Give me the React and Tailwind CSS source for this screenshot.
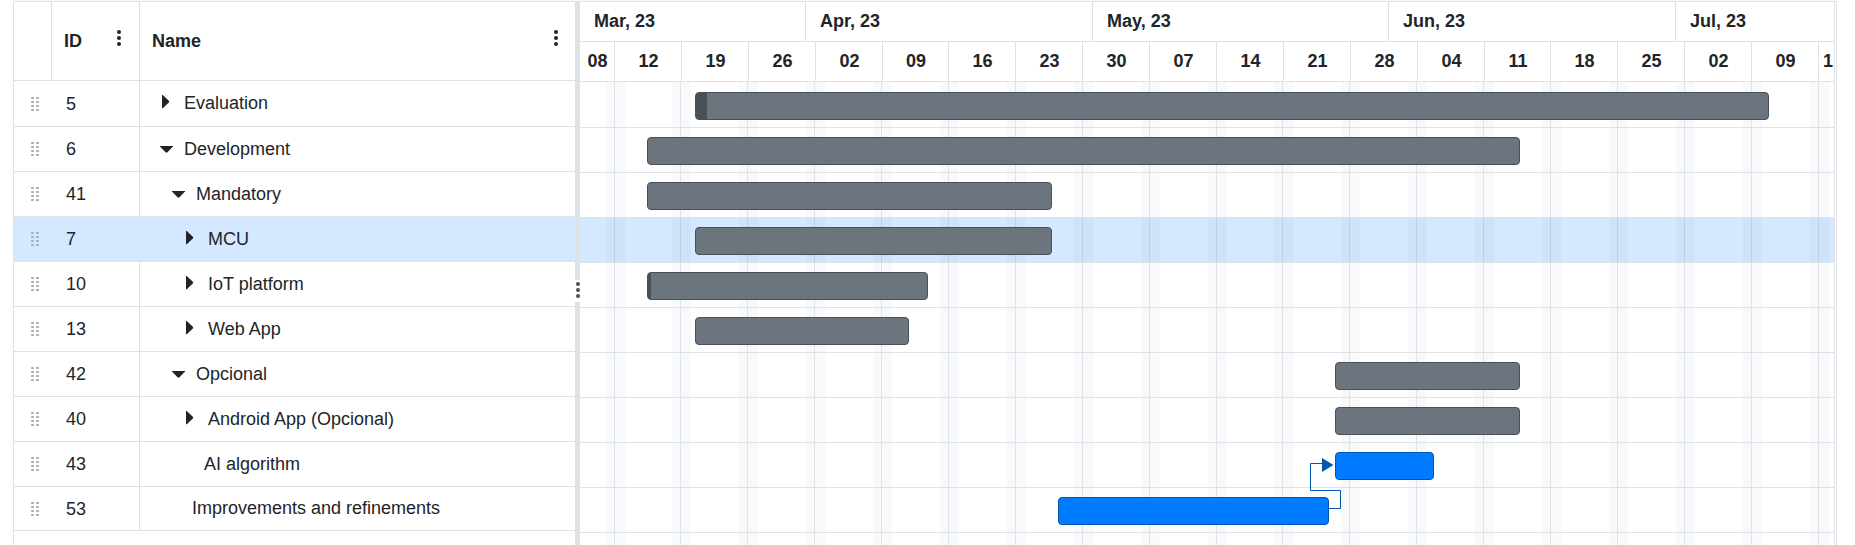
const DAY = 66.8889 / 7;
const FIRST_SUNDAY = 34;
const dayX = (days) => FIRST_SUNDAY + Math.round(days * DAY);

const months = [
  { label: 'Mar, 23', end: 20 },
  { label: 'Apr, 23', end: 50 },
  { label: 'May, 23', end: 81 },
  { label: 'Jun, 23', end: 111 },
  { label: 'Jul, 23', end: null },
];

const weeks = ['08', '12', '19', '26', '02', '09', '16', '23', '30', '07', '14', '21', '28', '04', '11', '18', '25', '02', '09', '1'];
const sundays = weeks.slice(1).map((_, i) => FIRST_SUNDAY + Math.floor(i * 7 * DAY));

const tasks = [
  { id: 5, name: 'Evaluation', level: 0, state: 'closed', start: 115, end: 1189, progress: 11 },
  { id: 6, name: 'Development', level: 0, state: 'open', start: 67, end: 940 },
  { id: 41, name: 'Mandatory', level: 1, state: 'open', start: 67, end: 472 },
  { id: 7, name: 'MCU', level: 2, state: 'closed', start: 115, end: 472, selected: true },
  { id: 10, name: 'IoT platform', level: 2, state: 'closed', start: 67, end: 348, progress: 3 },
  { id: 13, name: 'Web App', level: 2, state: 'closed', start: 115, end: 329 },
  { id: 42, name: 'Opcional', level: 1, state: 'open', start: 755, end: 940 },
  { id: 40, name: 'Android App (Opcional)', level: 2, state: 'closed', start: 755, end: 940 },
  { id: 43, name: 'AI algorithm', level: 2, start: 755, end: 854 },
  { id: 53, name: 'Improvements and refinements', level: 1, start: 478, end: 749 },
];

function MoreButton({ label }) {
  return (
    <button type="button" aria-label={label} className="mb-1.5 flex h-4 w-4 items-center justify-center text-[#212529]">
      <svg width="4" height="16" viewBox="0 0 4 16" fill="currentColor">
        <circle cx="2" cy="2" r="2" />
        <circle cx="2" cy="8" r="2" />
        <circle cx="2" cy="14" r="2" />
      </svg>
    </button>
  );
}

function DragHandle() {
  return (
    <svg width="8" height="14" viewBox="0 0 8 14" fill="#adb2b6" className="mx-auto">
      {[0, 4, 8, 12].map((y) => (
        <g key={y}>
          <rect x="0" y={y} width="3" height="2" rx="0.5" />
          <rect x="5" y={y} width="3" height="2" rx="0.5" />
        </g>
      ))}
    </svg>
  );
}

function Toggle({ state, name }) {
  return (
    <button type="button" aria-label={`Toggle ${name}`} className="mr-[11px] block w-[13px]">
      <svg width="13" height="16" viewBox="0 0 13 16" fill="#212529">
        {state === 'open' ? <path d="M0 5h13v0.6L7.5 11.2q-1 0.900-2 0L0 5.600z" /> : <path d="M2 0h0.800l6 5.800q0.800 0.800 0 1.600L2.800 13.300H2z" />}
      </svg>
    </button>
  );
}

function TaskTable() {
  return (
    <table className="w-full table-fixed border-separate border-spacing-0 text-left text-[18px] leading-6">
      <colgroup>
        <col className="w-[38px]" />
        <col className="w-[88px]" />
        <col />
      </colgroup>
      <thead>
        <tr className="h-[79px]">
          <th aria-label="Reorder" className="border-r border-b border-[#dee2e6] p-0" />
          <th className="border-r border-b border-[#dee2e6] p-0 pr-3 pl-3">
            <div className="flex items-center justify-between font-bold">
              ID
              <MoreButton label="ID column menu" />
            </div>
          </th>
          <th className="border-b border-[#dee2e6] p-0 pr-[11px] pl-3">
            <div className="flex items-center justify-between font-bold">
              Name
              <MoreButton label="Name column menu" />
            </div>
          </th>
        </tr>
      </thead>
      <tbody>
        {tasks.map((task) => (
          <tr key={task.id} className={`h-[45px] first:h-[46px] last:h-[44px] ${task.selected ? 'bg-[#d4e8ff]' : 'bg-white'}`}>
            <td className="border-b border-[#dee2e6] p-0 pl-1">
              <DragHandle />
            </td>
            <td className="border-r border-b border-[#dee2e6] p-0 pl-3.5">{task.id}</td>
            <td className="border-b border-[#dee2e6] p-0 pb-px pl-5">
              <div className="flex items-center" style={{ paddingLeft: task.level * 12 }}>
                {task.state ? <Toggle state={task.state} name={task.name} /> : <span className="w-5" />}
                {task.name}
              </div>
            </td>
          </tr>
        ))}
      </tbody>
    </table>
  );
}

function Bar({ task }) {
  const colors = task.state ? 'border-[#495057] bg-[#6c757d]' : 'border-[#0056b3] bg-[#007bff]';
  return (
    <div
      className={`absolute top-[9px] h-7 overflow-hidden rounded border ${colors}`}
      style={{ left: task.start, width: task.end - task.start }}
    >
      {task.progress && <div className="h-full bg-[#495057]" style={{ width: task.progress }} />}
    </div>
  );
}

function Timeline() {
  return (
    <div className="flex min-w-0 flex-1 flex-col overflow-hidden border-r border-[#dee2e6] text-[18px] font-bold">
      <div className="flex h-10 border-b border-[#dee2e6]">
        {months.map((month, i) => {
          const from = i ? dayX(months[i - 1].end) + 1 : 0;
          return month.end ? (
            <div
              key={month.label}
              className="flex shrink-0 items-center border-r border-[#dee2e6] pl-3.5"
              style={{ width: dayX(month.end) + 1 - from }}
            >
              {month.label}
            </div>
          ) : (
            <div key={month.label} className="flex flex-1 items-center pl-3.5">
              {month.label}
            </div>
          );
        })}
      </div>
      <div className="flex h-10 border-b border-[#dee2e6]">
        {weeks.map((week, i) => {
          if (i === weeks.length - 1) {
            return (
              <div key={i} className="flex flex-1 items-center overflow-hidden pl-1">
                {week}
              </div>
            );
          }
          const from = i ? dayX((i - 1) * 7) + 1 : 0;
          return (
            <div
              key={i}
              className="flex shrink-0 items-center justify-center border-r border-[#dee2e6] pl-px"
              style={{ width: dayX(i * 7) + 1 - from }}
            >
              {week}
            </div>
          );
        })}
      </div>
      <div className="relative isolate flex-1 overflow-hidden bg-white">
        <div className="absolute inset-0">
          {sundays.map((x) => (
            <div key={x} className="absolute inset-y-0 flex w-[19px] bg-[#f8f9fa]" style={{ left: x - 8 }}>
              <div className="ml-2 w-px bg-[#dee2e6]" />
            </div>
          ))}
        </div>
        <div className="pt-px">
          {tasks.map((task) => (
            <div key={task.id} className="relative h-[45px] border-b border-[#dee2e6]">
              {task.selected && <div className="absolute inset-0 bg-[#d4e8ff] mix-blend-multiply" />}
              <Bar task={task} />
            </div>
          ))}
        </div>
        <svg width="40" height="60" viewBox="0 0 40 60" className="absolute top-[373px] left-[726px]" fill="none" aria-hidden="true">
          <path d="M23 53.5H34.5V35.5H4.5V8.5H16" stroke="#0056b3" />
          <path d="M16 3v14l11.5-7z" fill="#0056b3" />
        </svg>
      </div>
    </div>
  );
}

export default function App() {
  return (
    <main className="min-h-screen bg-white pr-[18px] pl-[13px] font-['Liberation_Sans',Arial,sans-serif] text-[#212529]">
      <div className="h-px bg-[#f8f9fa]" />
      <div className="flex min-h-[calc(100vh-1px)] border border-b-0 border-[#dee2e6]">
        <section aria-label="Tasks" className="w-[561px] shrink-0">
          <TaskTable />
        </section>
        <div role="separator" aria-orientation="vertical" className="flex w-[5px] shrink-0 items-center justify-center bg-[#dee2e6] pt-[34px]">
          <div className="flex h-[22px] w-[5px] shrink-0 justify-center bg-white pt-0.5">
            <svg width="4" height="16" viewBox="0 0 4 16" fill="#495057" className="shrink-0">
              <circle cx="2" cy="2" r="2" />
              <circle cx="2" cy="8" r="2" />
              <circle cx="2" cy="14" r="2" />
            </svg>
          </div>
        </div>
        <div className="flex min-w-0 flex-1 pr-px">
          <Timeline />
        </div>
      </div>
    </main>
  );
}
